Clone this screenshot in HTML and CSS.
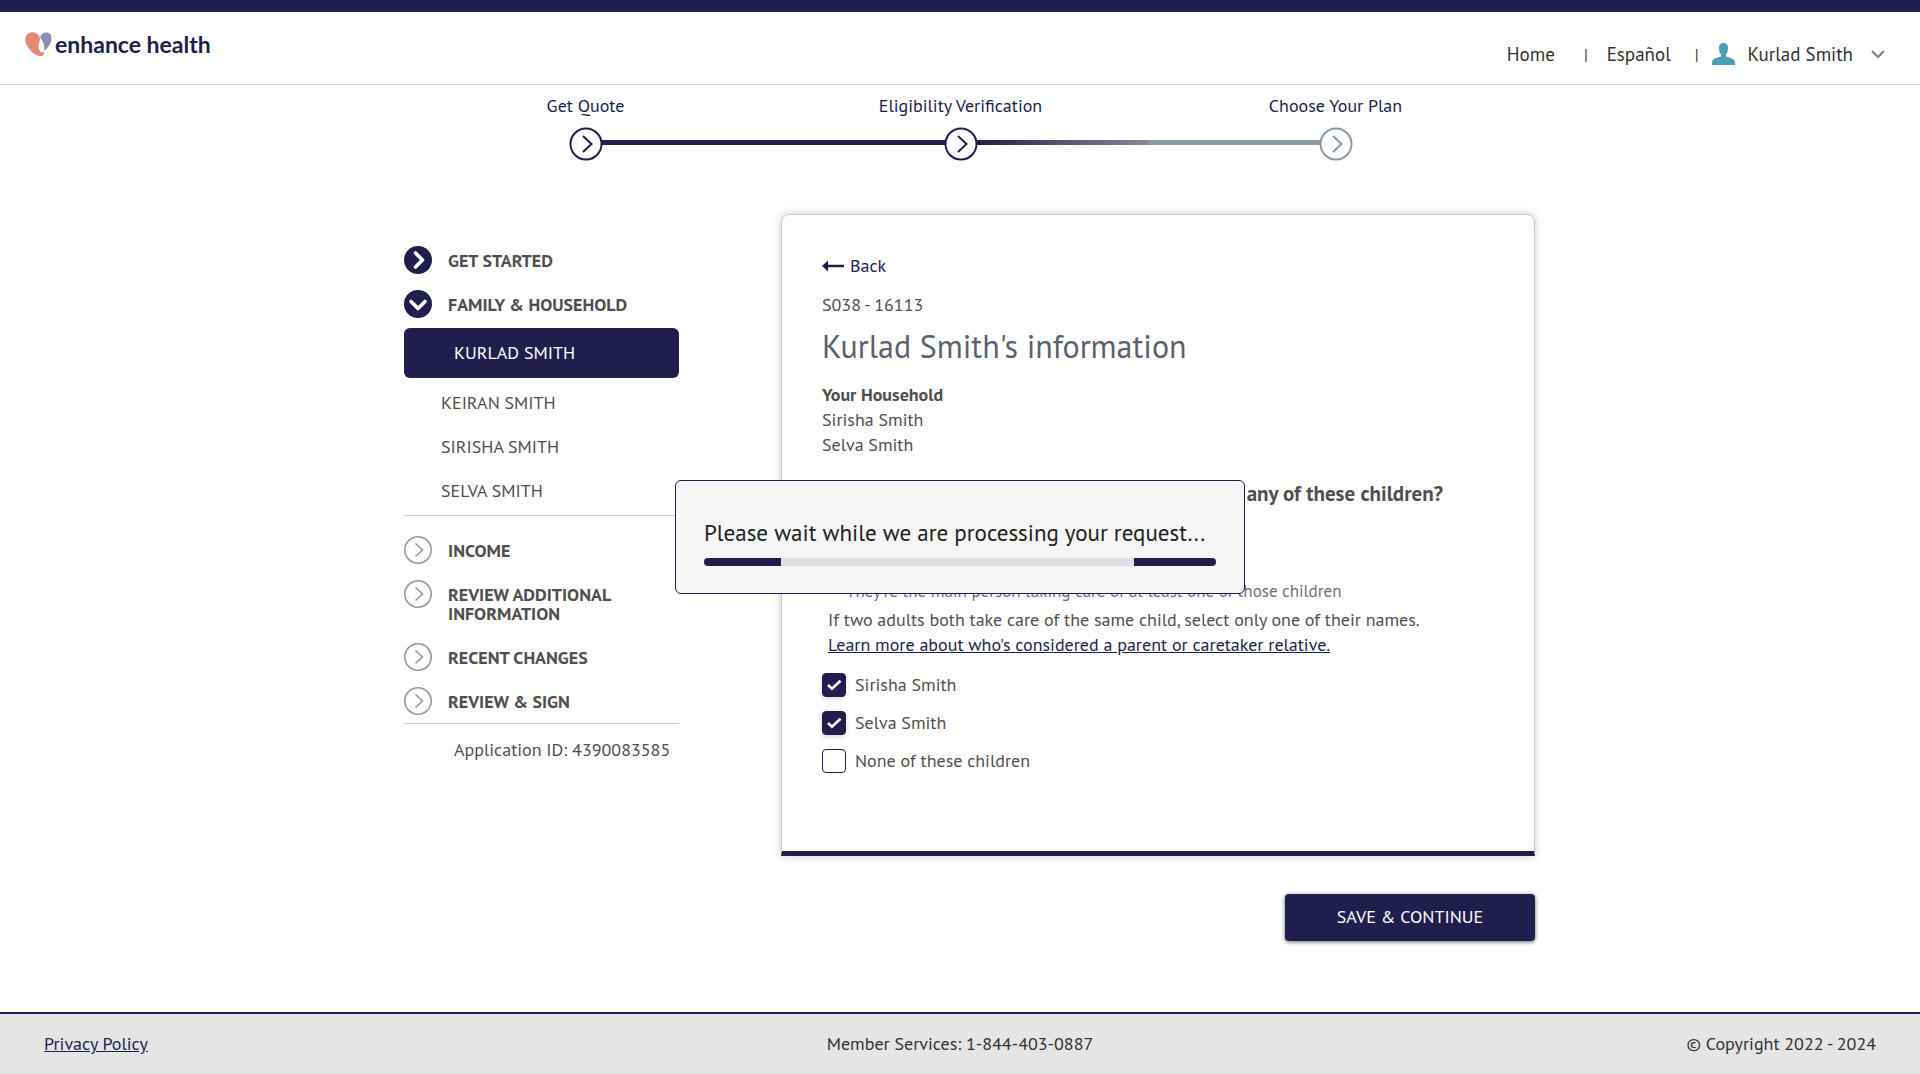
FILE: index.html
```html
<!DOCTYPE html>
<html lang="en">
<head>
<meta charset="utf-8">
<meta name="viewport" content="width=device-width, initial-scale=1">
<title>Enhance Health - Eligibility Verification</title>
<link rel="stylesheet" href="styles.css">
</head>
<body>
<svg class="sprite" aria-hidden="true">
  <symbol id="chevron-ring" viewBox="0 0 34 34">
    <circle cx="17" cy="17" r="15.500" fill="#fff" stroke="currentColor" stroke-width="2"/>
    <path d="M14 9l8.500 8L14 25" fill="none" stroke="currentColor" stroke-width="2"/>
  </symbol>
  <symbol id="chevron-thin" viewBox="0 0 28 28">
    <circle cx="14" cy="14" r="13.200" fill="none" stroke="currentColor" stroke-width="1.600"/>
    <path d="M11.500 7.500L18.500 14L11.500 20.500" fill="none" stroke="currentColor" stroke-width="1.600"/>
  </symbol>
  <symbol id="chevron-solid" viewBox="0 0 28 28">
    <circle cx="14" cy="14" r="14" fill="currentColor"/>
    <path d="M11.500 7L18.500 14L11.500 21" fill="none" stroke="#fff" stroke-width="3.600" stroke-linecap="round" stroke-linejoin="round"/>
  </symbol>
  <symbol id="chevron-solid-down" viewBox="0 0 28 28">
    <circle cx="14" cy="14" r="14" fill="currentColor"/>
    <path d="M7 11.500L14 18.500L21 11.500" fill="none" stroke="#fff" stroke-width="3.600" stroke-linecap="round" stroke-linejoin="round"/>
  </symbol>
</svg>

<header class="site-header">
  <a class="brand" href="#">
    <svg class="brand-mark" viewBox="0 0 27 25" aria-hidden="true">
      <path d="M13.500 3C11 -0.500 5 -0.300 2.500 2C-0.500 5-0.300 10 2.500 14.500C5.500 19 10.500 23.800 15 24.200C17.500 24.300 19.500 22.500 19 20C17.500 21 15.500 20.500 14.500 18.500C12.500 14.500 14.500 10 15 7C15 5.500 14.500 4.200 13.500 3Z" fill="#e58873"/>
      <path d="M15.500 4C17 1 20 0 22.500 0.500C26 1.500 27 5 26.300 8.500C25.500 12.500 22.500 16 19.300 19C19.800 14 18.500 9.500 15.700 6.500C15.300 5.700 15.200 4.800 15.500 4Z" fill="#8790b5"/>
    </svg>
    <span>enhance health</span>
  </a>
  <nav class="top-nav" aria-label="Account">
    <a href="#">Home</a>
    <span class="bar">|</span>
    <a href="#">Español</a>
    <span class="bar">|</span>
    <button class="user-menu" type="button">
      <svg class="avatar" viewBox="0 0 23 22" aria-hidden="true"><path d="M7 4.500C7 1.500 9 0 11.500 0S16 1.500 16 4.500C16 7.500 15.500 10 14 11.500V13.500C17 14.500 21 15 22.500 17.500C23 18.500 23 20.500 23 22H0C0 20.500 0 18.500 .5 17.500C2 15 6 14.500 9 13.500V11.500C7.500 10 7 7.500 7 4.500Z" fill="#4b9fb9"/></svg>
      <span>Kurlad Smith</span>
      <svg class="caret" viewBox="0 0 14 9" aria-hidden="true"><path d="M1 1L7 7L13 1" fill="none" stroke="#808080" stroke-width="2"/></svg>
    </button>
  </nav>
</header>

<ol class="stepper">
  <li class="done"><span>Get Quote</span><div class="track"><i class="blank"></i><svg><use href="#chevron-ring"/></svg><i></i></div></li>
  <li class="current"><span>Eligibility Verification</span><div class="track"><i></i><svg><use href="#chevron-ring"/></svg><i class="fade"></i></div></li>
  <li class="todo"><span>Choose Your Plan</span><div class="track"><i></i><svg><use href="#chevron-ring"/></svg><i class="blank"></i></div></li>
</ol>

<main class="layout">
  <nav class="sections" aria-label="Application sections">
    <ul>
      <li><a class="section" href="#"><svg class="on"><use href="#chevron-solid"/></svg><span>GET STARTED</span></a></li>
      <li>
        <a class="section" href="#"><svg class="on"><use href="#chevron-solid-down"/></svg><span>FAMILY &amp; HOUSEHOLD</span></a>
        <ul class="members">
          <li><a class="active" href="#" aria-current="page">KURLAD SMITH</a></li>
          <li><a href="#">KEIRAN SMITH</a></li>
          <li><a href="#">SIRISHA SMITH</a></li>
          <li><a href="#">SELVA SMITH</a></li>
        </ul>
      </li>
    </ul>
    <ul class="upcoming">
      <li><a class="section" href="#"><svg><use href="#chevron-thin"/></svg><span>INCOME</span></a></li>
      <li><a class="section" href="#"><svg><use href="#chevron-thin"/></svg><span>REVIEW ADDITIONAL INFORMATION</span></a></li>
      <li><a class="section" href="#"><svg><use href="#chevron-thin"/></svg><span>RECENT CHANGES</span></a></li>
      <li><a class="section" href="#"><svg><use href="#chevron-thin"/></svg><span>REVIEW &amp; SIGN</span></a></li>
    </ul>
    <p class="app-id">Application ID: 4390083585</p>
  </nav>

  <form class="content">
    <section class="card">
      <a class="back" href="#"><svg viewBox="0 0 22 12" aria-hidden="true"><path d="M0 6L6 0.500V4.800H22V7.200H6V11.500Z" fill="currentColor"/></svg><span>Back</span></a>
      <p class="code">S038 - 16113</p>
      <h1>Kurlad Smith's information</h1>
      <p class="household"><strong>Your Household</strong><br>Sirisha Smith<br>Selva Smith</p>
      <fieldset>
        <legend>Does Kurlad Smith reside with and take care of any of these children?</legend>
        <ul class="criteria"><li>They're the main person taking care of at least one of those children</li></ul>
        <p class="hint">If two adults both take care of the same child, select only one of their names.<br><a href="#">Learn more about who's considered a parent or caretaker relative.</a></p>
        <div class="choices">
          <label><input type="checkbox" checked><span>Sirisha Smith</span></label>
          <label><input type="checkbox" checked><span>Selva Smith</span></label>
          <label><input type="checkbox"><span>None of these children</span></label>
        </div>
      </fieldset>
    </section>
    <button class="save" type="submit">SAVE &amp; CONTINUE</button>
  </form>
</main>

<footer class="site-footer">
  <a href="#">Privacy Policy</a>
  <span>Member Services: 1-844-403-0887</span>
  <span>© Copyright 2022 - 2024</span>
</footer>

<div class="wait" role="alertdialog" aria-labelledby="wait-text">
  <p id="wait-text">Please wait while we are processing your request...</p>
  <div class="progress"><i class="head"></i><i class="tail"></i></div>
</div>
</body>
</html>
```
FILE: styles.css
```css
:root {
  --navy: #211e4e;
  --text: #4f4f4f;
  --rule: #d0d0d0;
}

* { box-sizing: border-box; }

body {
  margin: 0;
  min-height: 100vh;
  display: flex;
  flex-direction: column;
  background: #fff;
  color: var(--text);
  font-family: "PT Sans", "Noto Sans", sans-serif;
  font-size: 18px;
  line-height: 24px;
}

a { color: inherit; text-decoration: none; }
ul, ol { list-style: none; margin: 0; padding: 0; }
p { margin: 0; }
svg { flex: none; }
.sprite { position: absolute; width: 0; height: 0; }

/* header */
.site-header {
  display: flex;
  justify-content: space-between;
  border-top: 12px solid var(--navy);
  border-bottom: 1px solid #d8d8d8;
  padding: 18px 35px 18px 25px;
  min-height: 85px;
}
.brand {
  display: flex;
  align-items: center;
  align-self: flex-start;
  gap: 3px;
  color: var(--navy);
  font: 700 23px/28px Lato, sans-serif;
}
.brand-mark { width: 27px; height: 25px; }
.top-nav {
  display: flex;
  align-items: center;
  align-self: flex-end;
  color: #333;
  font-size: 19px;
}
.top-nav .bar { margin: 0 19px 0 29px; font-size: 16px; }
.top-nav .bar:nth-of-type(2) { margin: 0 13px 0 24px; }
.user-menu {
  display: flex;
  align-items: center;
  padding: 0;
  border: 0;
  background: none;
  color: inherit;
  font: inherit;
}
.avatar { width: 23px; height: 22px; margin-right: 13px; }
.caret { width: 14px; height: 9px; margin-left: 18px; }

/* progress through the application */
.stepper {
  display: grid;
  grid-template-columns: repeat(3, 1fr);
  width: 100%;
  max-width: 1126px;
  margin: 0 auto;
  padding-top: 9px;
  padding-left: 1px;
  text-align: center;
  color: var(--navy);
}
.track { display: flex; align-items: center; margin-top: 9px; }
.track svg { width: 34px; height: 34px; margin: 0 -1px; }
.track i { flex: 1; height: 5px; margin-bottom: 3px; background: var(--navy); }
.track .blank { background: none; }
.track .fade { background: linear-gradient(90deg, var(--navy), #858b94); }
.todo .track { color: #8f99a4; }
.todo .track i:first-child { background: #8f99a4; }

/* two-column body */
.layout {
  display: grid;
  grid-template-columns: 275px minmax(0, 754px);
  gap: 102px;
  justify-content: center;
  padding: 53px 0 70px 19px;
  flex: 1;
}

.sections { padding-top: 24px; }
.section {
  display: flex;
  gap: 16px;
  padding: 8px 0;
  font-weight: 700;
  line-height: 19px;
}
.section span { padding: 5px 0 4px; }
.section svg { width: 28px; height: 28px; color: #999; }
.section .on { color: var(--navy); }
.members { padding: 2px 0; border-bottom: 1px solid var(--rule); }
.members a { display: block; padding: 10px 37px; }
.members .active {
  padding: 13px 50px;
  margin-bottom: 3px;
  border-radius: 6px;
  background: var(--navy);
  color: #fff;
}
.upcoming { padding-top: 12px; border-bottom: 1px solid var(--rule); }
.upcoming span { max-width: 200px; }
.app-id { padding-top: 14px; padding-left: 50px; white-space: nowrap; }

.content { display: flex; flex-direction: column; }
.card {
  min-height: 642px;
  padding: 39px 40px;
  border: 1px solid #c8c8c8;
  border-bottom: 5px solid var(--navy);
  border-radius: 8px 8px 0 0;
  box-shadow: 0 0 10px rgba(0, 0, 0, .2);
}
.back { display: flex; align-items: center; gap: 6px; color: var(--navy); }
.back svg { width: 22px; height: 12px; }
.code { margin-top: 15px; }
h1 {
  margin: 9px 0 0;
  color: #5b616e;
  font-size: 32px;
  font-weight: 400;
  line-height: 40px;
}
.household { margin-top: 16px; line-height: 25px; }
fieldset { margin: 0; padding: 0; border: 0; min-width: 0; }
legend { padding: 24px 0 0; font-size: 21px; font-weight: 700; line-height: 25px; }
.criteria { padding: 73px 0 0 24px; color: #6b7280; font-size: 17px; }
.hint { padding: 4px 6px 0; line-height: 25px; }
.hint a { color: var(--navy); text-decoration: underline; }
.choices { display: grid; gap: 14px; padding-top: 16px; }
.choices label { display: flex; align-items: center; gap: 9px; }
.choices input {
  appearance: none;
  width: 24px;
  height: 24px;
  margin: 0;
  border: 1px solid var(--navy);
  border-radius: 4px;
  background: #fff;
}
.choices input:checked {
  background: var(--navy) url("data:image/svg+xml,%3Csvg xmlns='http://www.w3.org/2000/svg' viewBox='0 0 22 22'%3E%3Cpath d='M5 11L9 14.800L17.500 6.800' fill='none' stroke='white' stroke-width='2.600'/%3E%3C/svg%3E") center / 22px 22px no-repeat;
  box-shadow: 0 2px 5px rgba(0, 0, 0, .15);
}
.save {
  align-self: flex-end;
  width: 250px;
  margin-top: 38px;
  padding: 11px 0 12px;
  border: 0;
  border-radius: 4px;
  background: var(--navy);
  color: #fff;
  font: inherit;
  box-shadow: 0 1px 4px rgba(0, 0, 0, .6);
}

/* footer */
.site-footer {
  display: grid;
  grid-template-columns: 1fr auto 1fr;
  padding: 18px 44px;
  border-top: 2px solid var(--navy);
  background: #e5e5e5;
  color: #333;
}
.site-footer a { justify-self: start; color: var(--navy); text-decoration: underline; }
.site-footer span:last-child { justify-self: end; }

/* processing dialog, over the page */
.wait {
  position: fixed;
  top: 50%;
  left: 50%;
  transform: translate(-50%, -50%);
  width: 570px;
  padding: 36px 28px 27px;
  border: 1px solid var(--navy);
  border-radius: 6px;
  background: #f5f5f5;
  color: #222;
  font-size: 23px;
  line-height: 32px;
  white-space: nowrap;
}
.progress {
  display: flex;
  justify-content: space-between;
  height: 8px;
  margin-top: 9px;
  border-radius: 4px;
  background: #dde1e5;
  overflow: hidden;
}
.progress .head { width: 15%; background: var(--navy); }
.progress .tail { width: 16%; background: var(--navy); }
```
